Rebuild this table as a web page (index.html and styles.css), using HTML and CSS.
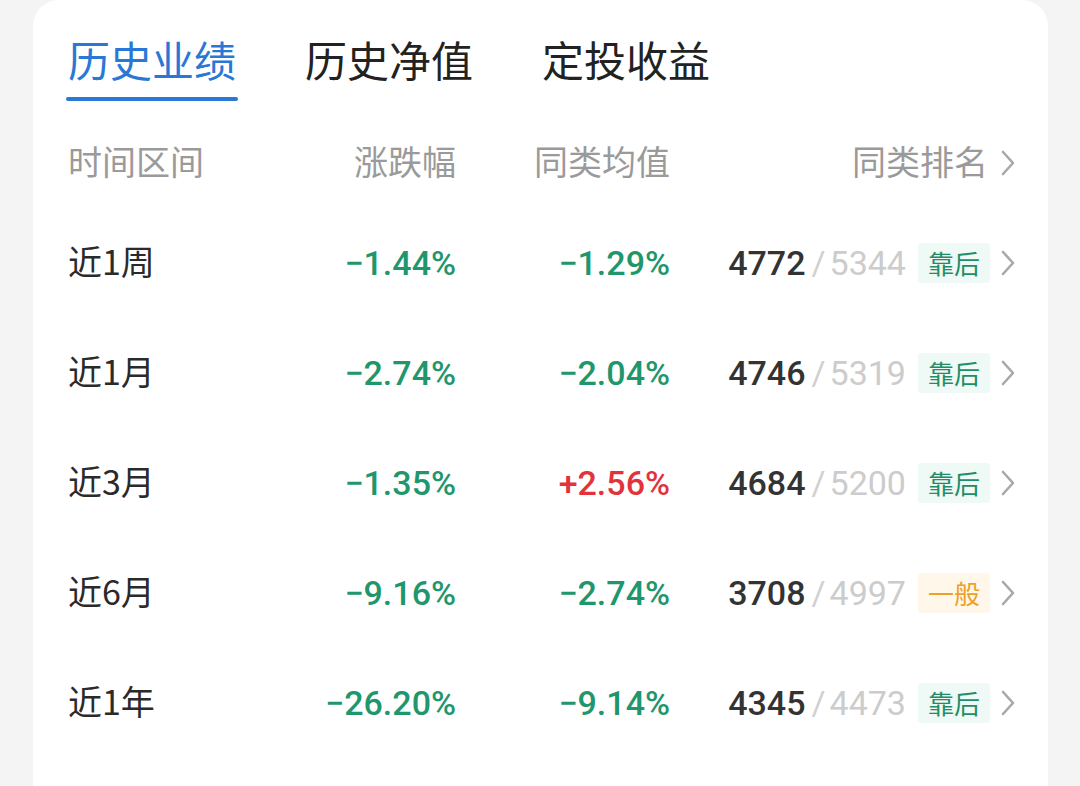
FILE: index.html
```html
<!DOCTYPE html>
<html lang="zh">
<head>
<meta charset="utf-8">
<link rel="stylesheet" href="styles.css">
</head>
<body>
<div class="card">
  <div class="tabs">
    <div class="tab active"><span class="tab-text">历史业绩</span><span class="tab-line"></span></div>
    <div class="tab"><span class="tab-text">历史净值</span></div>
    <div class="tab"><span class="tab-text">定投收益</span></div>
  </div>

  <div class="grid head">
    <div class="c1 cjk">时间区间</div>
    <div class="c2 cjk">涨跌幅</div>
    <div class="c3 cjk">同类均值</div>
    <div class="c4"><span class="cjk">同类排名</span><svg class="chev" viewBox="0 0 16 26"><path d="M3 2 L13 13 L3 24"/></svg></div>
  </div>

  <div class="grid row">
    <div class="c1 cjk">近1周</div>
    <div class="c2 num down">−1.44%</div>
    <div class="c3 num down">−1.29%</div>
    <div class="c4"><span class="rk">4772</span><span class="sl">/</span><span class="tot">5344</span><span class="badge bad">靠后</span><svg class="chev" viewBox="0 0 16 26"><path d="M3 2 L13 13 L3 24"/></svg></div>
  </div>
  <div class="grid row">
    <div class="c1 cjk">近1月</div>
    <div class="c2 num down">−2.74%</div>
    <div class="c3 num down">−2.04%</div>
    <div class="c4"><span class="rk">4746</span><span class="sl">/</span><span class="tot">5319</span><span class="badge bad">靠后</span><svg class="chev" viewBox="0 0 16 26"><path d="M3 2 L13 13 L3 24"/></svg></div>
  </div>
  <div class="grid row">
    <div class="c1 cjk">近3月</div>
    <div class="c2 num down">−1.35%</div>
    <div class="c3 num up">+2.56%</div>
    <div class="c4"><span class="rk">4684</span><span class="sl">/</span><span class="tot">5200</span><span class="badge bad">靠后</span><svg class="chev" viewBox="0 0 16 26"><path d="M3 2 L13 13 L3 24"/></svg></div>
  </div>
  <div class="grid row">
    <div class="c1 cjk">近6月</div>
    <div class="c2 num down">−9.16%</div>
    <div class="c3 num down">−2.74%</div>
    <div class="c4"><span class="rk">3708</span><span class="sl">/</span><span class="tot">4997</span><span class="badge mid">一般</span><svg class="chev" viewBox="0 0 16 26"><path d="M3 2 L13 13 L3 24"/></svg></div>
  </div>
  <div class="grid row">
    <div class="c1 cjk">近1年</div>
    <div class="c2 num down">−26.20%</div>
    <div class="c3 num down">−9.14%</div>
    <div class="c4"><span class="rk">4345</span><span class="sl">/</span><span class="tot">4473</span><span class="badge bad">靠后</span><svg class="chev" viewBox="0 0 16 26"><path d="M3 2 L13 13 L3 24"/></svg></div>
  </div>
</div>
</body>
</html>
```

FILE: styles.css
```css
html, body {
  margin: 0;
  padding: 0;
  background: #f4f4f4;
  height: 786px;
  overflow: hidden;
}
body {
  font-family: "Noto Sans CJK SC", "Noto Sans", sans-serif;
  color: #333;
}
.card {
  margin-left: 33px;
  width: 1015px;
  height: 786px;
  background: #fff;
  border-radius: 26px 26px 0 0;
  box-sizing: border-box;
  padding: 34px 32px 0 35px;
}
.tabs {
  display: flex;
  gap: 69px;
}
.tab {
  display: flex;
  flex-direction: column;
  font-size: 42px;
  line-height: 50px;
  color: #222;
}
.tab.active { color: #2a78d6; }
.tab-line {
  display: block;
  height: 4px;
  margin: 13px -2px 0;
  background: #2a78d6;
  border-radius: 2px;
}
.grid {
  display: grid;
  grid-template-columns: 200px 188px 214px 1fr;
  align-items: center;
}
.head {
  margin-top: 17px;
  height: 90px;
  font-size: 34px;
  color: #9a9a9a;
}
.row {
  height: 110px;
  font-size: 34px;
  color: #2a2a2a;
}
.cjk { padding-bottom: 5px; }
.c2, .c3 { text-align: right; }
.c4 {
  display: flex;
  align-items: center;
  justify-content: flex-end;
}
.num {
  font-family: Roboto, "Noto Sans", sans-serif;
  font-weight: 500;
  font-size: 34px;
}
.down { color: #1f966c; }
.up { color: #e2333d; }
.rk {
  font-family: Roboto, sans-serif;
  font-weight: 500;
  font-size: 34px;
  color: #333;
}
.sl {
  font-family: Roboto, sans-serif;
  font-size: 34px;
  color: #d0d0d0;
  margin: 0 4px 0 6px;
}
.tot {
  font-family: Roboto, sans-serif;
  font-size: 34px;
  color: #cccccc;
}
.badge {
  margin-left: 12px;
  font-size: 26px;
  line-height: 40px;
  padding: 0 10px;
  border-radius: 3px;
}
.bad { color: #1f8e68; background: #eff9f5; }
.mid { color: #eea02a; background: #fff8ea; }
.chev {
  width: 16px;
  height: 26px;
  margin-left: 10px;
  fill: none;
  stroke: #a8a8a8;
  stroke-width: 2.6;
  stroke-linecap: round;
  stroke-linejoin: round;
}
.head .chev { margin-left: 12px; }
```
